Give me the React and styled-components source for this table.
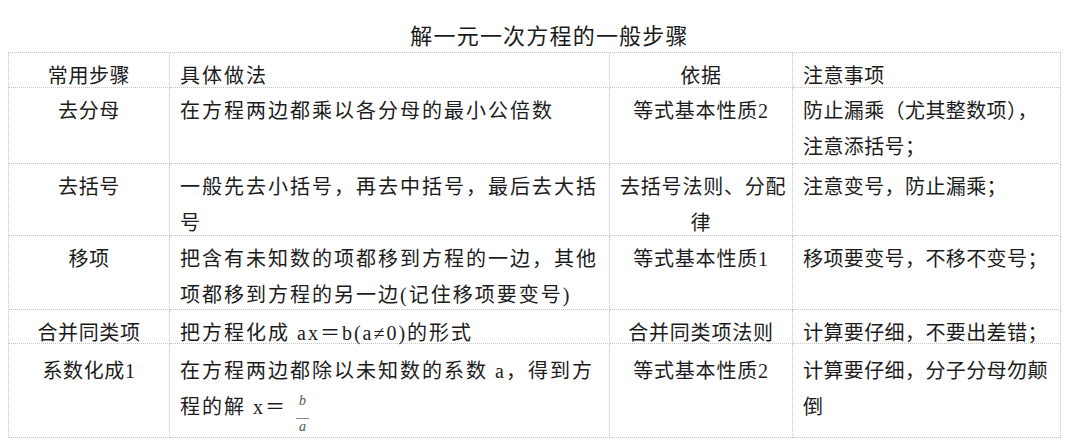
import styled, { createGlobalStyle } from "styled-components";

const GlobalStyle = createGlobalStyle`
  body {
    margin: 0;
    background: #fff;
    font-family: "Liberation Serif", "Noto Sans CJK SC", serif;
    color: #1c1c1c;
  }
`;

const Frac = ({ top, bottom }) => (
  <Fraction>
    <FracPart>{top}</FracPart>
    <FracBar />
    <FracPart>{bottom}</FracPart>
  </Fraction>
);

const columns = [
  { align: "center", spacing: 0.6 },
  { align: "left", spacing: 2 },
  { align: "center", spacing: 0.8 },
  { align: "left", spacing: 0.4 },
];

const rows = [
  { h: 35, cells: [["常用步骤"], ["具体做法"], ["依据"], ["注意事项"]] },
  {
    h: 76,
    cells: [
      ["去分母"],
      ["在方程两边都乘以各分母的最小公倍数"],
      ["等式基本性质2"],
      ["防止漏乘（尤其整数项），", "注意添括号；"],
    ],
  },
  {
    h: 72,
    cells: [
      ["去括号"],
      ["一般先去小括号，再去中括号，最后去大括", "号"],
      ["去括号法则、分配", "律"],
      ["注意变号，防止漏乘；"],
    ],
  },
  {
    h: 74,
    cells: [
      ["移项"],
      ["把含有未知数的项都移到方程的一边，其他", "项都移到方程的另一边(记住移项要变号)"],
      ["等式基本性质1"],
      ["移项要变号，不移不变号；"],
    ],
  },
  {
    h: 34,
    cells: [
      ["合并同类项"],
      ["把方程化成 ax＝b(a≠0)的形式"],
      ["合并同类项法则"],
      ["计算要仔细，不要出差错；"],
    ],
  },
  {
    h: 94,
    pt: 9,
    cells: [
      ["系数化成1"],
      [
        "在方程两边都除以未知数的系数 a，得到方",
        <>
          程的解 x＝ <Frac top="b" bottom="a" />
        </>,
      ],
      ["等式基本性质2"],
      ["计算要仔细，分子分母勿颠", "倒"],
    ],
  },
];

const App = () => {
  return (
    <Page>
      <GlobalStyle />
      <Title>解一元一次方程的一般步骤</Title>
      <Table $rows={rows.map((r) => r.h + "px").join(" ")}>
        {rows.map((row, ri) =>
          row.cells.map((lines, ci) => (
            <Cell
              key={ri + "-" + ci}
              $align={columns[ci].align}
              $spacing={columns[ci].spacing}
              $pt={row.pt || 5}
            >
              {lines.map((line, li) => (
                <Line key={li}>{line}</Line>
              ))}
            </Cell>
          ))
        )}
      </Table>
    </Page>
  );
};

const Page = styled.div`
  padding: 22px 19px 0 8px;
`;

const Title = styled.h1`
  margin: 0;
  width: 1053px;
  box-sizing: border-box;
  padding-left: 30px;
  height: 30px;
  line-height: 30px;
  text-align: center;
  font-size: 22px;
  font-weight: 400;
  letter-spacing: 1.2px;
  color: #1a1a1a;
`;

const Table = styled.div`
  display: grid;
  grid-template-columns: 161px 440px 183px 268px;
  grid-template-rows: ${(p) => p.$rows};
  width: 1053px;
  border-top: 1px dotted #c4c4c4;
  border-left: 1px dotted #c4c4c4;
  box-sizing: border-box;
`;

const Cell = styled.div`
  box-sizing: border-box;
  border-right: 1px dotted #c4c4c4;
  border-bottom: 1px dotted #c4c4c4;
  padding: ${(p) => p.$pt}px 10px 0 10px;
  text-align: ${(p) => p.$align};
  letter-spacing: ${(p) => p.$spacing}px;
  font-size: 20px;
  line-height: 36px;
  white-space: nowrap;
  overflow: visible;
`;

const Line = styled.div`
  height: 36px;
`;

const Fraction = styled.span`
  display: inline-flex;
  flex-direction: column;
  align-items: center;
  vertical-align: 9px;
  margin-left: 2px;
  font-family: "Liberation Serif", serif;
  font-style: italic;
  font-size: 14px;
  line-height: 15px;
  color: #555;
  letter-spacing: 0;
`;

const FracPart = styled.span`
  display: block;
  padding: 0 2px;
`;

const FracBar = styled.span`
  display: block;
  width: 13px;
  height: 1px;
  margin: 10px 0 0;
  background: #888;
`;

export default App;
